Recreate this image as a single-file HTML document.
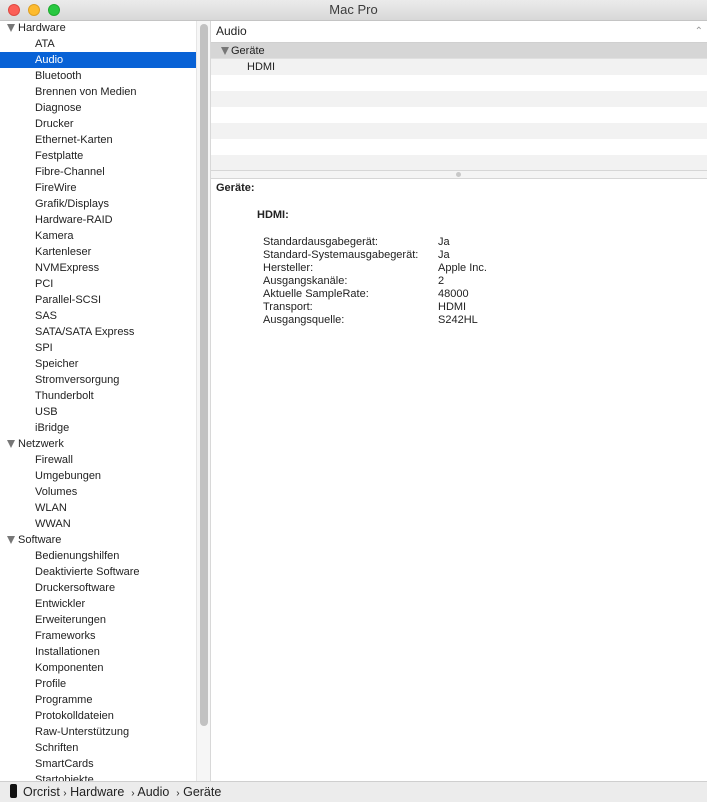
<!DOCTYPE html>
<html><head><meta charset="utf-8"><style>
*{margin:0;padding:0;box-sizing:border-box}
body{width:707px;height:802px;overflow:hidden;font-family:"Liberation Sans",sans-serif;font-size:11px;color:#222;background:#fff;position:relative}
.title{position:absolute;left:0;top:0;width:707px;height:21px;background:linear-gradient(#ebebeb,#d8d8d8);border-bottom:1px solid #c4c4c4;text-align:center;font-size:13px;line-height:20px;color:#3c3c3c;z-index:2}
.dot{position:absolute;top:4px;width:12px;height:12px;border-radius:50%}
.side{position:absolute;left:0;top:20px;width:196px;height:761px;overflow:hidden}
.row{height:16px;line-height:17px;padding-left:35px;white-space:nowrap}
.grp{padding-left:7px}
.grp:before{content:"";display:inline-block;border-left:4.5px solid transparent;border-right:4.5px solid transparent;border-top:8px solid #777;margin-right:3px;vertical-align:-1px}
.sel{background:#0862d6;color:#fff}
.track{position:absolute;left:196px;top:21px;width:15px;height:760px;background:#f6f6f6;border-left:1px solid #e6e6e6;border-right:1px solid #d8d8d8}
.thumb{position:absolute;left:3px;top:3px;width:8px;height:702px;border-radius:4px;background:#c2c2c2}
.right{position:absolute;left:211px;top:21px;width:496px}
.hdr{height:22px;line-height:21px;padding-left:5px;font-size:12px;border-bottom:1px solid #d0d0d0;position:relative}
.r{height:16px;line-height:16px}
.det{position:absolute;left:211px;top:181px;width:496px}
.status{position:absolute;left:0;top:781px;width:707px;height:21px;background:#ececec;border-top:1px solid #cfcfcf;font-size:12.5px;line-height:21px;color:#222}
table{border-collapse:collapse;position:absolute;left:52px;top:55px}
td{height:13px;line-height:13px;padding:0;font-size:11px}
</style></head><body>
<div class="title">Mac Pro
<div class="dot" style="left:8px;background:#fc5f57;border:1px solid #de4a42"></div>
<div class="dot" style="left:28px;background:#fdbb2e;border:1px solid #de9f23"></div>
<div class="dot" style="left:48px;background:#28c840;border:1px solid #1eab2f"></div>
</div>
<div class="side">
<div class="row grp">Hardware</div>
<div class="row">ATA</div>
<div class="row sel">Audio</div>
<div class="row">Bluetooth</div>
<div class="row">Brennen von Medien</div>
<div class="row">Diagnose</div>
<div class="row">Drucker</div>
<div class="row">Ethernet-Karten</div>
<div class="row">Festplatte</div>
<div class="row">Fibre-Channel</div>
<div class="row">FireWire</div>
<div class="row">Grafik/Displays</div>
<div class="row">Hardware-RAID</div>
<div class="row">Kamera</div>
<div class="row">Kartenleser</div>
<div class="row">NVMExpress</div>
<div class="row">PCI</div>
<div class="row">Parallel-SCSI</div>
<div class="row">SAS</div>
<div class="row">SATA/SATA Express</div>
<div class="row">SPI</div>
<div class="row">Speicher</div>
<div class="row">Stromversorgung</div>
<div class="row">Thunderbolt</div>
<div class="row">USB</div>
<div class="row">iBridge</div>
<div class="row grp">Netzwerk</div>
<div class="row">Firewall</div>
<div class="row">Umgebungen</div>
<div class="row">Volumes</div>
<div class="row">WLAN</div>
<div class="row">WWAN</div>
<div class="row grp">Software</div>
<div class="row">Bedienungshilfen</div>
<div class="row">Deaktivierte Software</div>
<div class="row">Druckersoftware</div>
<div class="row">Entwickler</div>
<div class="row">Erweiterungen</div>
<div class="row">Frameworks</div>
<div class="row">Installationen</div>
<div class="row">Komponenten</div>
<div class="row">Profile</div>
<div class="row">Programme</div>
<div class="row">Protokolldateien</div>
<div class="row">Raw-Unterstützung</div>
<div class="row">Schriften</div>
<div class="row">SmartCards</div>
<div class="row">Startobjekte</div>
</div>
<div class="track"><div class="thumb"></div></div>
<div class="right">
<div class="hdr">Audio<span style="position:absolute;right:4px;top:0;color:#999;font-size:10px">&#8963;</span></div>
<div class="r" style="background:#d6d6d6;padding-left:10px;border-bottom:1px solid #e0e0e0"><span style="display:inline-block;border-left:4.5px solid transparent;border-right:4.5px solid transparent;border-top:8px solid #777;margin-right:2px;vertical-align:-1px"></span>Geräte</div>
<div class="r" style="background:#f2f2f2;padding-left:36px">HDMI</div>
<div class="r"></div><div class="r" style="background:#f2f2f2"></div>
<div class="r"></div><div class="r" style="background:#f2f2f2"></div>
<div class="r"></div><div class="r" style="background:#f2f2f2;height:15px"></div>
<div style="height:9px;background:#f4f4f4;border-top:1px solid #d6d6d6;border-bottom:1px solid #d6d6d6;position:relative"><div style="position:absolute;left:245px;top:1px;width:5px;height:5px;border-radius:50%;background:#c8c8c8"></div></div>
</div>
<div class="det">
<div style="position:absolute;left:5px;top:1px;font-weight:bold">Geräte:</div>
<div style="position:absolute;left:46px;top:28px;font-weight:bold">HDMI:</div>
<table>
<tr><td style="width:175px">Standardausgabegerät:</td><td>Ja</td></tr>
<tr><td>Standard-Systemausgabegerät:</td><td>Ja</td></tr>
<tr><td>Hersteller:</td><td>Apple Inc.</td></tr>
<tr><td>Ausgangskanäle:</td><td>2</td></tr>
<tr><td>Aktuelle SampleRate:</td><td>48000</td></tr>
<tr><td>Transport:</td><td>HDMI</td></tr>
<tr><td>Ausgangsquelle:</td><td>S242HL</td></tr>
</table>
</div>
<div class="status"><span style="display:inline-block;width:7px;height:14px;background:#111;border-radius:2px;margin:0 6px 0 10px;vertical-align:-2px"></span>Orcrist <span style="font-size:10px">›</span> Hardware &nbsp;<span style="font-size:10px">›</span> Audio &nbsp;<span style="font-size:10px">›</span> Geräte</div>
</body></html>
